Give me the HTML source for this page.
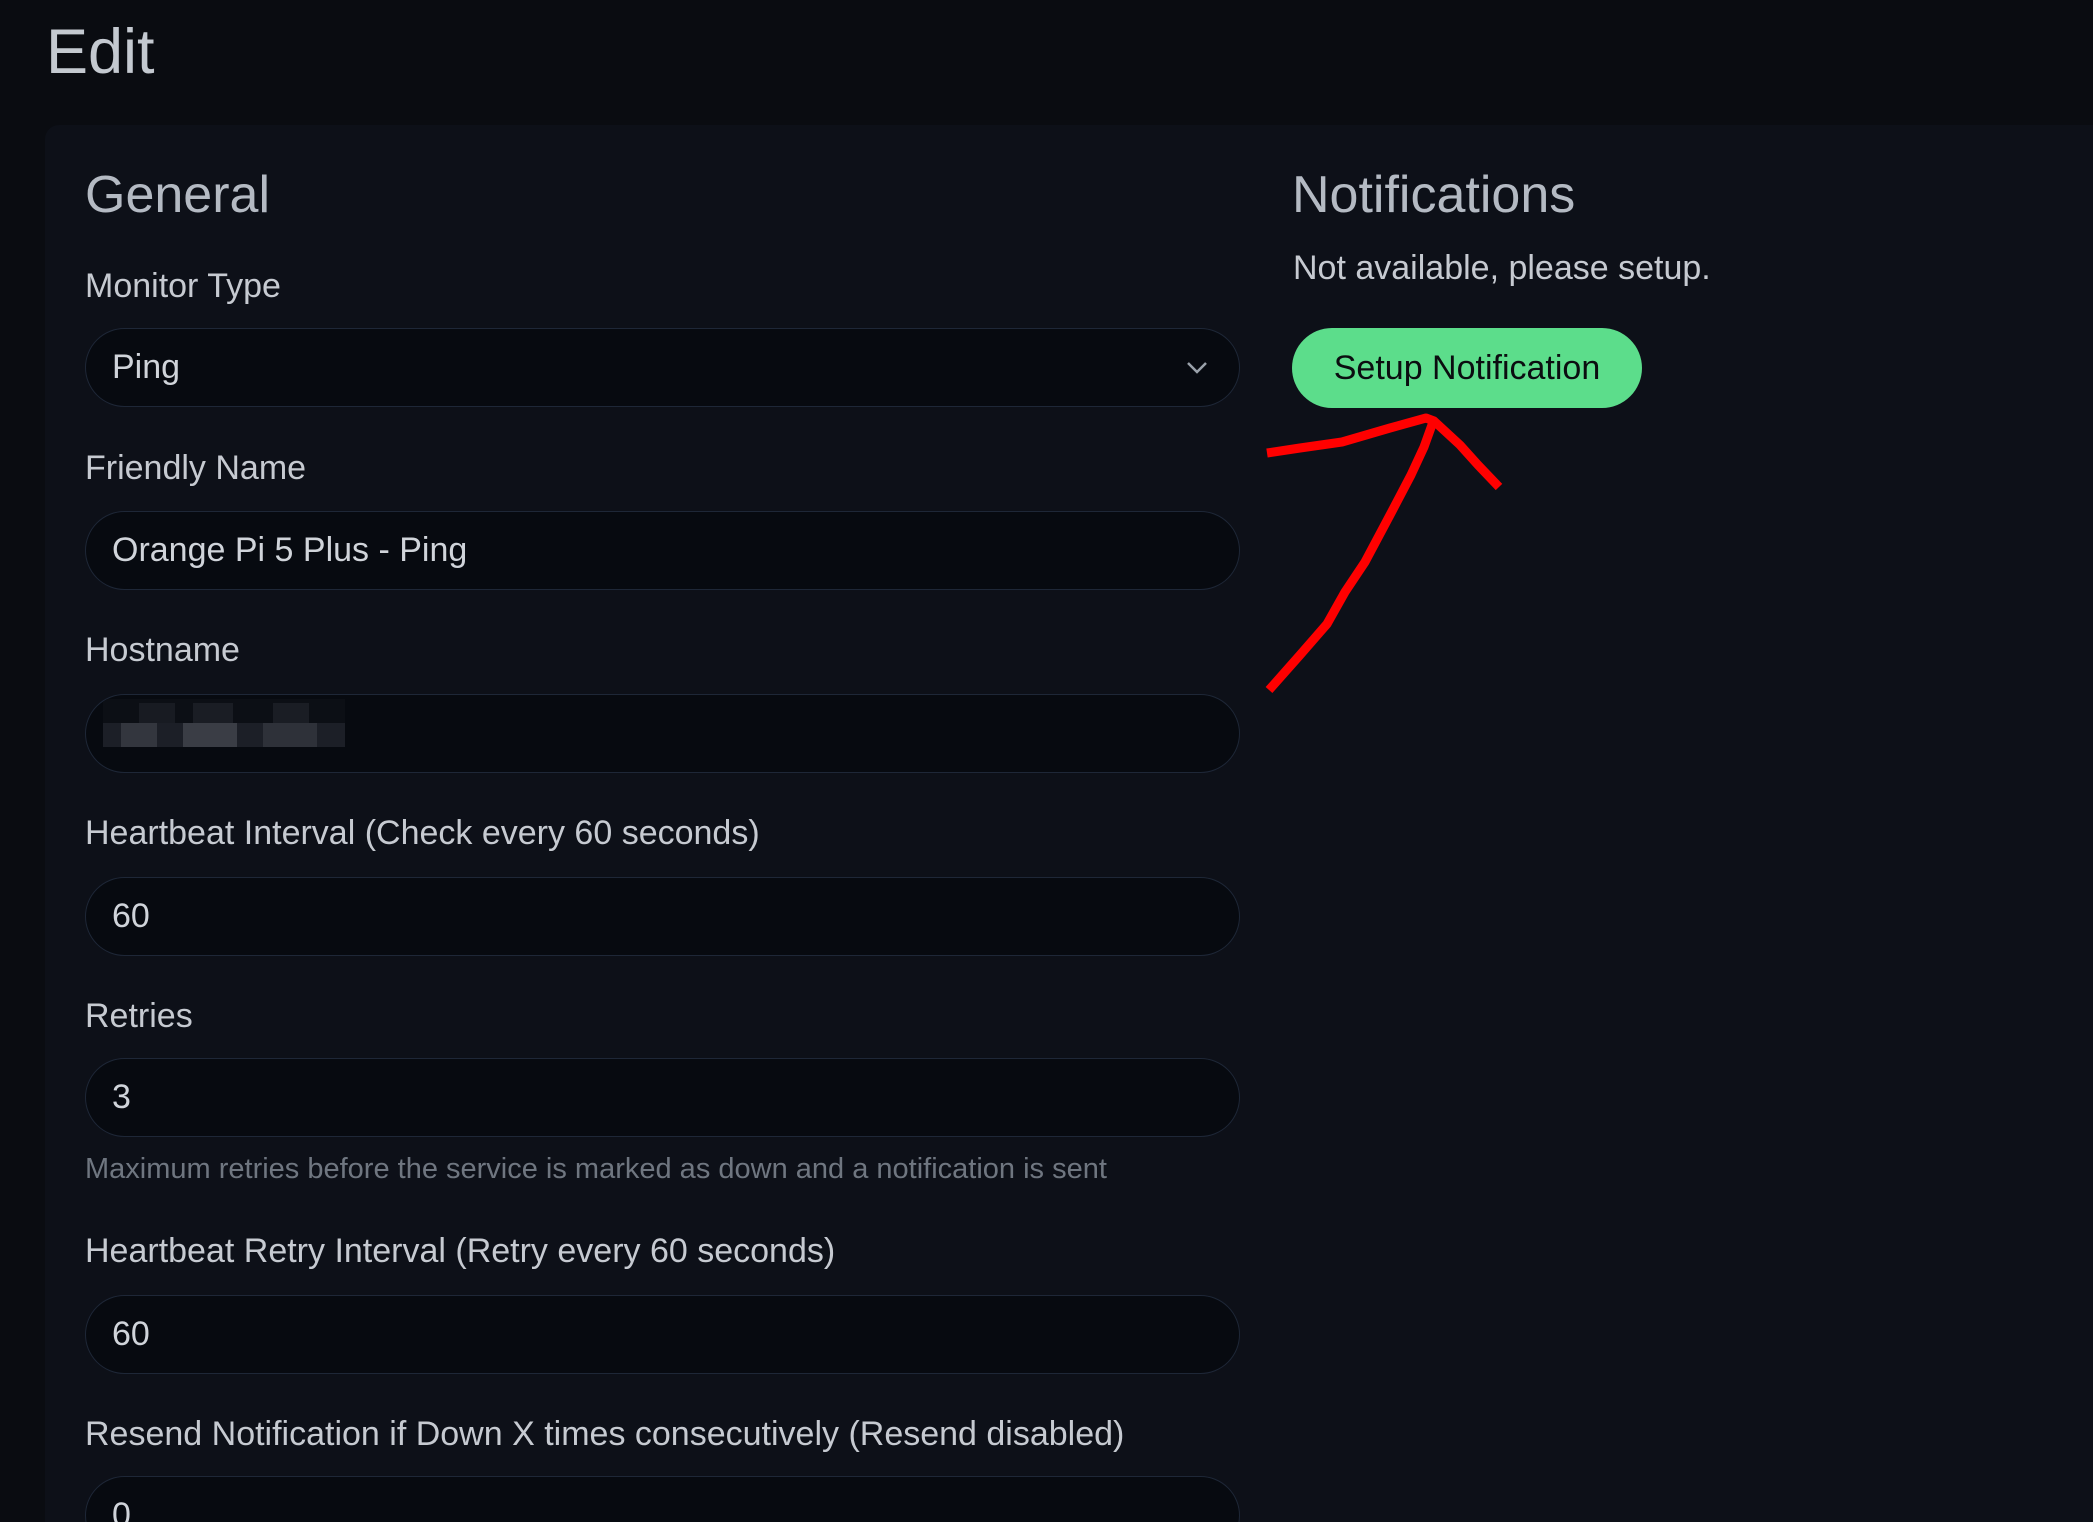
<!DOCTYPE html>
<html><head><meta charset="utf-8"><style>
html,body{margin:0;padding:0;width:2093px;height:1522px;overflow:hidden;background:#0a0c11;font-family:"Liberation Sans",sans-serif;position:relative;}
.t{position:absolute;white-space:nowrap;}
#edit{left:46px;top:16px;font-size:63px;color:#c4c9d0;}
#card{position:absolute;left:45px;top:125px;width:2048px;height:1397px;background:#0d1018;border-radius:14px 0 0 0;}
.h{font-size:52px;color:#b4bac3;}
.lbl{font-size:34px;color:#c6cad1;}
.inp{position:absolute;left:85px;width:1155px;height:79px;border:1.5px solid #1e2737;border-radius:40px;background:#070a10;box-sizing:border-box;overflow:hidden;}
.inp span{position:absolute;left:26px;top:19px;font-size:34px;color:#d0d4da;}
.help{font-size:29px;color:#6f7680;}
#btn{position:absolute;left:1292px;top:328px;width:350px;height:80px;border-radius:40px;background:#5cdd8b;color:#0b0d10;font-size:34px;text-align:center;line-height:80px;}
</style></head><body>
<div class="t" id="edit">Edit</div>
<div id="card"></div>
<div class="t h" style="left:85px;top:165px">General</div>
<div class="t h" style="left:1292px;top:165px">Notifications</div>
<div class="t lbl" style="left:1293px;top:249px">Not available, please setup.</div>
<div id="btn">Setup Notification</div>

<div class="t lbl" style="left:85px;top:267px">Monitor Type</div>
<div class="inp" style="top:328px"><span>Ping</span>
<svg style="position:absolute;left:1100px;top:31px" width="22" height="16" viewBox="0 0 22 16"><path d="M2 3 L11 12 L20 3" fill="none" stroke="#9aa1aa" stroke-width="2.5"/></svg></div>

<div class="t lbl" style="left:85px;top:449px">Friendly Name</div>
<div class="inp" style="top:511px"><span>Orange Pi 5 Plus - Ping</span></div>

<div class="t lbl" style="left:85px;top:631px">Hostname</div>
<div class="inp" style="top:694px">
<svg style="position:absolute;left:17px;top:4px" width="242" height="48" viewBox="0 0 242 48">
<rect x="0" y="0" width="242" height="48" fill="#0c0f15"/>
<rect x="0" y="24" width="242" height="24" fill="#1c1f27"/>
<rect x="18" y="24" width="36" height="24" fill="#33363e"/>
<rect x="80" y="24" width="54" height="24" fill="#3a3d45"/>
<rect x="160" y="24" width="54" height="24" fill="#2e3139"/>
<rect x="36" y="4" width="36" height="20" fill="#181b22"/>
<rect x="90" y="4" width="40" height="20" fill="#1a1d24"/>
<rect x="170" y="4" width="36" height="20" fill="#1a1d24"/>
</svg></div>

<div class="t lbl" style="left:85px;top:814px">Heartbeat Interval (Check every 60 seconds)</div>
<div class="inp" style="top:877px"><span>60</span></div>

<div class="t lbl" style="left:85px;top:997px">Retries</div>
<div class="inp" style="top:1058px"><span>3</span></div>
<div class="t help" style="left:85px;top:1153px">Maximum retries before the service is marked as down and a notification is sent</div>

<div class="t lbl" style="left:85px;top:1232px">Heartbeat Retry Interval (Retry every 60 seconds)</div>
<div class="inp" style="top:1295px"><span>60</span></div>

<div class="t lbl" style="left:85px;top:1415px">Resend Notification if Down X times consecutively (Resend disabled)</div>
<div class="inp" style="top:1476px;height:79px"><span>0</span></div>

<svg style="position:absolute;left:0;top:0" width="2093" height="1522">
<path d="M1267 453 L1300 448 L1342 442 L1390 428 L1426 418 L1434 421 L1460 445 L1478 465 L1499 487" fill="none" stroke="#ff0000" stroke-width="9" stroke-linejoin="round"/>
<path d="M1433 422 L1424 447 L1411 475 L1390 515 L1365 562 L1345 592 L1327 624 L1300 655 L1269 690" fill="none" stroke="#ff0000" stroke-width="9" stroke-linejoin="round"/>
</svg>
</body></html>
